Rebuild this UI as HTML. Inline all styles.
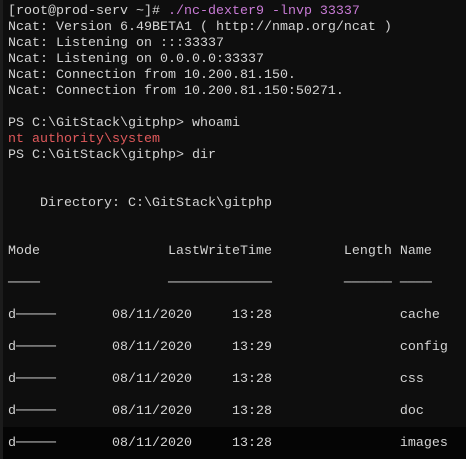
<!DOCTYPE html>
<html><head><style>
html,body{margin:0;padding:0;background:#0e0e0e;}
body{width:466px;height:459px;overflow:hidden;position:relative;}
pre{margin:0;position:absolute;left:8px;top:4px;font-family:"Liberation Mono",monospace;font-size:13.33px;line-height:16px;color:#d4d4d4;}
.c{color:#c97bd6}.r{color:#e0595b}
.bot{position:absolute;left:0;top:427px;width:466px;height:32px;background:#050505;}
.edge{position:absolute;left:0;top:0;width:3px;height:459px;background:#1c1c1c;}
</style></head><body>
<div class="bot"></div><div class="edge"></div>
<pre>[root@prod-serv ~]# <span class="c">./nc-dexter9 -lnvp 33337</span>
Ncat: Version 6.49BETA1 ( http://nmap.org/ncat )
Ncat: Listening on :::33337
Ncat: Listening on 0.0.0.0:33337
Ncat: Connection from 10.200.81.150.
Ncat: Connection from 10.200.81.150:50271.

PS C:\GitStack\gitphp&gt; whoami
<span class="r">nt authority\system</span>
PS C:\GitStack\gitphp&gt; dir


    Directory: C:\GitStack\gitphp


Mode                LastWriteTime         Length Name

────                ─────────────         ────── ────

d─────       08/11/2020     13:28                cache

d─────       08/11/2020     13:29                config

d─────       08/11/2020     13:28                css

d─────       08/11/2020     13:28                doc

d─────       08/11/2020     13:28                images
</pre>
</body></html>
